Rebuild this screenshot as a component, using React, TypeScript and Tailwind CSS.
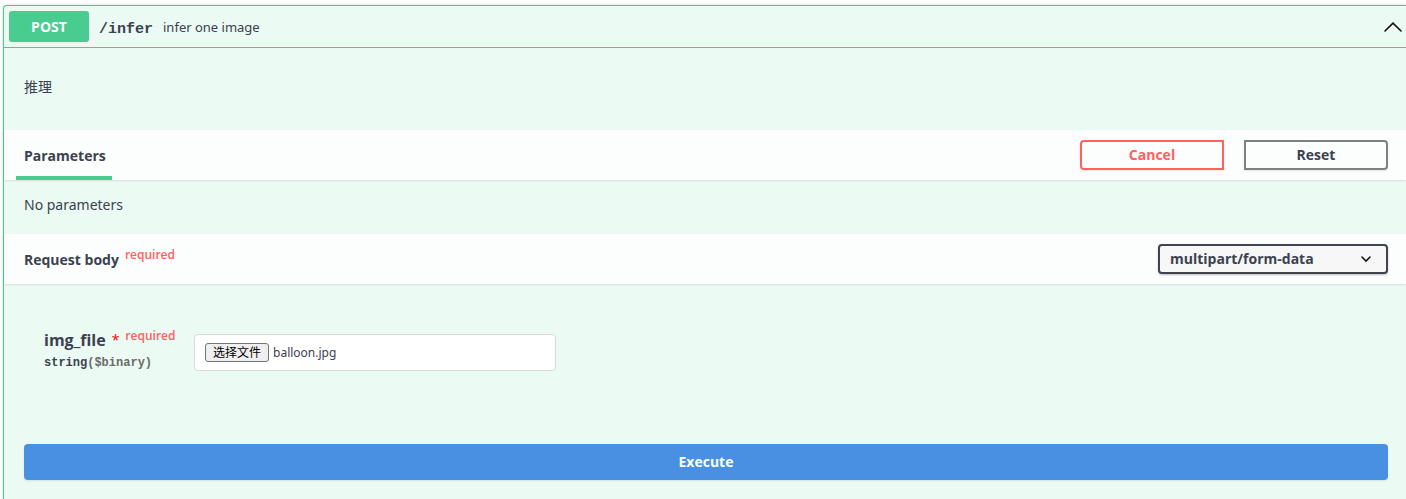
import { useState } from "react";

const font = "font-['Open_Sans','Noto_Sans_CJK_SC',sans-serif]";

export default function App() {
  const [open, setOpen] = useState(true);
  const [fileName, setFileName] = useState("balloon.jpg");

  return (
    <main className={`min-h-screen bg-white pt-[5px] pl-[3px] text-[#3b4151] ${font}`}>
      <section className="min-h-[494px] rounded-tl border-t border-l border-[#49cc90] bg-[#ebfaf3] shadow-[0_0_3px_rgba(0,0,0,0.19)]">
        <header className={`flex h-[42px] items-center pl-[5px] ${open ? "border-b border-[#49cc90]" : ""}`}>
          <span className="w-20 rounded-[3px] bg-[#49cc90] text-center text-sm leading-[31px] font-bold text-white">
            POST
          </span>
          <a href="#infer" className="px-2.5 pt-1.5 font-['Liberation_Mono',monospace] text-[15px] leading-5 font-bold">
            /infer
          </a>
          <span className="flex-1 pt-0.5 font-['Noto_Sans',sans-serif] text-[13px]">infer one image</span>
          <button type="button" aria-label="Toggle operation" aria-expanded={open} onClick={() => setOpen(!open)} className="pr-1">
            <svg width="18" height="10" viewBox="0 0 18 10" fill="none" stroke="#111" strokeWidth="1.6" strokeLinecap="round">
              <path d="M1 9 9 1.2 17 9" />
            </svg>
          </button>
        </header>

        {open && (
          <div>
            <p className="px-5 pt-7 pb-8 text-sm leading-[22px]">推理</p>

            <div className="flex h-[50px] items-center justify-between bg-[#fcfefd] pr-[18px] pl-3 shadow-[0_1px_2px_rgba(0,0,0,0.1)]">
              <h4 className="flex h-full w-24 items-center border-b-4 border-[#49cc90] pt-1.5 pl-2 text-sm font-bold">
                Parameters
              </h4>
              <div className="flex gap-5">
                <button type="button" className="h-[30px] w-36 rounded-l border-2 border-[#ff6060] text-sm leading-[26px] font-bold text-[#ff6060] shadow-[0_1px_2px_rgba(0,0,0,0.1)]">
                  Cancel
                </button>
                <button type="button" className="h-[30px] w-36 rounded-r border-2 border-[#808080] text-sm leading-[26px] font-bold shadow-[0_1px_2px_rgba(0,0,0,0.1)]">
                  Reset
                </button>
              </div>
            </div>

            <p className="px-5 pt-[15px] pb-[19px] font-['Noto_Sans',sans-serif] text-sm leading-5">No parameters</p>

            <div className="flex h-[50px] items-center justify-between bg-[#fcfefd] pr-[18px] pl-5 shadow-[0_1px_2px_rgba(0,0,0,0.1)]">
              <h4 className="flex gap-1.5 pt-0.5 text-sm font-bold">
                Request body
                <span className="text-xs leading-2.5 font-semibold text-[#ff6060]">required</span>
              </h4>
              <div className="grid w-[230px] items-center">
                <select
                  aria-label="Request content type"
                  className="col-start-1 row-start-1 h-[30px] appearance-none rounded border-2 border-[#41444e] bg-[#f7f7f7] pr-10 pl-2.5 text-sm leading-[26px] font-bold shadow-[0_1px_2px_rgba(0,0,0,0.25)]"
                >
                  <option>multipart/form-data</option>
                </select>
                <svg className="pointer-events-none col-start-1 row-start-1 mr-4 justify-self-end" width="12" height="8" viewBox="0 0 12 8" fill="none" stroke="#111" strokeWidth="1.6" strokeLinecap="round">
                  <path d="M2 2 6 6 10 2" />
                </svg>
              </div>
            </div>

            <form onSubmit={(e) => e.preventDefault()} className="pr-[18px] pl-5">
              <div className="flex items-start px-5 pt-11">
                <div className="w-[150px]">
                  <div className="flex gap-1.5 text-base leading-6 font-bold">
                    <span>img_file</span>
                    <span className="text-sm leading-6 font-normal text-[#ff0000]">*</span>
                    <span className="text-xs leading-[15px] font-semibold text-[#ff6060]">required</span>
                  </div>
                  <div className="pt-px font-['Liberation_Mono',monospace] text-xs leading-5 font-bold">
                    string<span className="text-[#6b6b6b]">($binary)</span>
                  </div>
                </div>
                <label className="mt-1.5 flex h-[37px] w-[362px] items-center gap-1 rounded border border-[#d9d9d9] bg-white px-2.5 text-xs">
                  <input
                    type="file"
                    aria-label="img_file"
                    className="sr-only"
                    onChange={(e) => setFileName(e.target.files?.[0]?.name ?? "")}
                  />
                  <span className="rounded-[3px] border border-[#767676] bg-[#efefef] px-[7px] leading-[17px] text-black">
                    选择文件
                  </span>
                  <span className="font-['Noto_Sans',sans-serif]">{fileName}</span>
                </label>
              </div>
              <button type="submit" className="mt-[71px] h-9 w-full rounded bg-[#4990e2] text-sm font-bold text-white shadow-[0_1px_2px_rgba(0,0,0,0.1)]">
                Execute
              </button>
            </form>
          </div>
        )}
      </section>
    </main>
  );
}
